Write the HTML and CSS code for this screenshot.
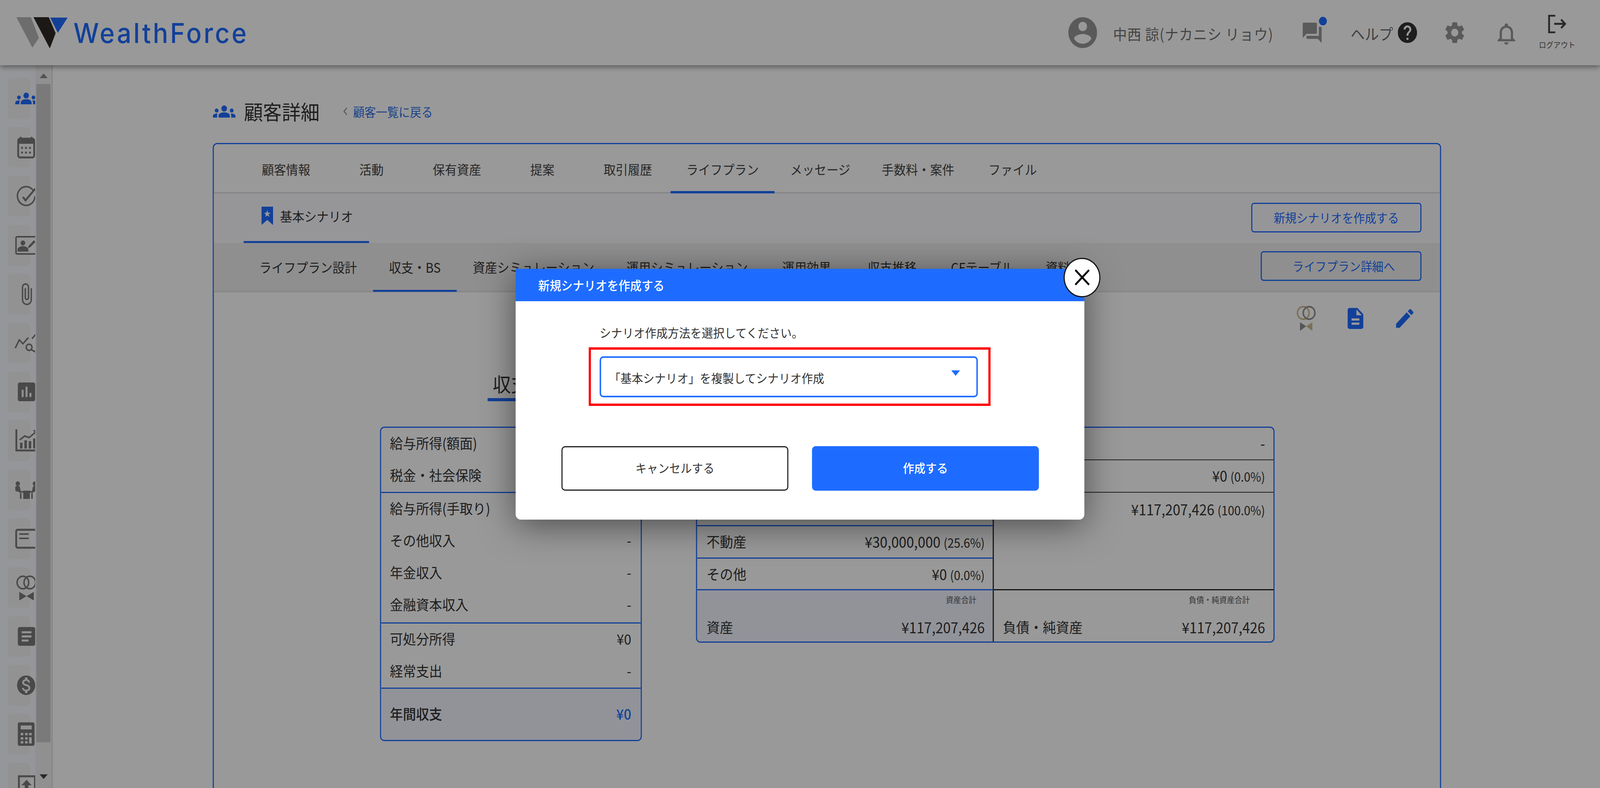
FILE: index.html
```html
<!DOCTYPE html>
<html lang="ja">
<head>
<meta charset="utf-8">
<title>顧客詳細</title>
<link rel="stylesheet" href="styles.css">
</head>
<body>
<div class="app" id="app">
<header class="topbar">
  <a class="logo">
    <svg class="logo-mark" viewBox="0 0 142 80"><polygon class="lm-grey" points="0,0 40,0 62,53 44,78"/><polygon class="lm-black" points="47,0 89,0 108,41 92,80"/><polygon class="lm-blue" points="93,1 141,1 114,40"/></svg>
    <span class="logo-text">WealthForce</span>
  </a>
  <div class="top-right">
    <svg class="i-avatar" viewBox="2 2 20 20"><path d="M12 2C6.48 2 2 6.48 2 12s4.48 10 10 10 10-4.48 10-10S17.52 2 12 2zm0 3c1.66 0 3 1.34 3 3s-1.34 3-3 3-3-1.34-3-3 1.34-3 3-3zm0 14.2c-2.5 0-4.71-1.28-6-3.22.03-1.99 4-3.08 6-3.08 1.99 0 5.97 1.09 6 3.08-1.29 1.94-3.5 3.22-6 3.22z"/></svg>
    <span class="user-name">中西 諒(ナカニシ リョウ)</span>
    <span class="chat">
      <svg class="i-chat" viewBox="2 2 20 20"><path d="M21 6h-2v9H6v2c0 .55.45 1 1 1h11l4 4V7c0-.55-.45-1-1-1zm-4 6V3c0-.55-.45-1-1-1H3c-.55 0-1 .45-1 1v14l4-4h10c.55 0 1-.45 1-1z"/></svg>
      <span class="chat-dot"></span>
    </span>
    <span class="help-text">ヘルプ</span>
    <svg class="i-help" viewBox="2 2 20 20"><path d="M12 2C6.48 2 2 6.48 2 12s4.48 10 10 10 10-4.48 10-10S17.52 2 12 2zm1 17h-2v-2h2v2zm2.07-7.75l-.9.92C13.45 12.9 13 13.5 13 15h-2v-.5c0-1.1.45-2.1 1.17-2.83l1.24-1.26c.37-.36.59-.86.59-1.41 0-1.1-.9-2-2-2s-2 .9-2 2H8c0-2.21 1.79-4 4-4s4 1.79 4 4c0 .88-.36 1.68-.93 2.25z"/></svg>
    <svg class="i-gear" viewBox="2.6 2 18.8 20"><path d="M19.14 12.94c.04-.3.06-.61.06-.94 0-.32-.02-.64-.07-.94l2.03-1.58c.18-.14.23-.41.12-.61l-1.92-3.32c-.12-.22-.37-.29-.59-.22l-2.39.96c-.5-.38-1.03-.7-1.62-.94l-.36-2.54c-.04-.24-.24-.41-.48-.41h-3.84c-.24 0-.43.17-.47.41l-.36 2.54c-.59.24-1.13.57-1.62.94l-2.39-.96c-.22-.08-.47 0-.59.22L2.74 8.87c-.12.21-.08.47.12.61l2.03 1.58c-.05.3-.09.63-.09.94s.02.64.07.94l-2.03 1.58c-.18.14-.23.41-.12.61l1.92 3.32c.12.22.37.29.59.22l2.39-.96c.5.38 1.03.7 1.62.94l.36 2.54c.05.24.24.41.48.41h3.84c.24 0 .44-.17.47-.41l.36-2.54c.59-.24 1.13-.56 1.62-.94l2.39.96c.22.08.47 0 .59-.22l1.92-3.32c.12-.22.07-.47-.12-.61l-2.01-1.58zM12 15.6c-1.98 0-3.6-1.62-3.6-3.6s1.62-3.6 3.6-3.6 3.6 1.62 3.6 3.6-1.62 3.6-3.6 3.6z"/></svg>
    <svg class="i-bell" viewBox="4 2.5 16 19.5" preserveAspectRatio="none"><path d="M12 22c1.1 0 2-.9 2-2h-4c0 1.1.9 2 2 2zm6-6v-5c0-3.07-1.63-5.64-4.5-6.32V4c0-.83-.67-1.5-1.5-1.5s-1.5.67-1.5 1.5v.68C7.64 5.36 6 7.92 6 11v5l-2 2v1h16v-1l-2-2zm-2 1H8v-6c0-2.48 1.51-4.5 4-4.5s4 2.02 4 4.5v6z"/></svg>
    <div class="logout">
      <svg class="i-logout" viewBox="0 0 51 47"><path class="lo-stroke" d="M20 2H3v43h17M17 23h30M36 12l11 11-11 11"/></svg>
      <span class="logout-text">ログアウト</span>
    </div>
  </div>
</header>

<div class="layout">
  <aside class="sidebar">
    <nav class="side-nav">
      <div class="side-item"><svg class="nav-icon nav-active" viewBox="0 0 60 60"><path transform="translate(0 15) scale(2.5) translate(0 -6)" d="M12 12.75c1.63 0 3.07.39 4.24.9 1.08.48 1.76 1.56 1.76 2.73V18H6v-1.61c0-1.18.68-2.26 1.76-2.73 1.17-.52 2.61-.91 4.24-.91zM4 13c1.1 0 2-.9 2-2s-.9-2-2-2-2 .9-2 2 .9 2 2 2zm1.13 1.1C4.76 14.04 4.39 14 4 14c-.99 0-1.93.21-2.78.58C.48 14.9 0 15.62 0 16.43V18h4.5v-1.61c0-.83.23-1.61.63-2.29zM20 13c1.1 0 2-.9 2-2s-.9-2-2-2-2 .9-2 2 .9 2 2 2zm4 3.43c0-.81-.48-1.53-1.22-1.85-.85-.37-1.79-.58-2.78-.58-.39 0-.76.04-1.13.1.4.68.63 1.46.63 2.29V18H24v-1.57zM12 6c1.66 0 3 1.34 3 3s-1.34 3-3 3-3-1.34-3-3 1.34-3 3-3z"/></svg></div>
      <div class="side-item"><svg class="nav-icon" viewBox="0 0 60 60"><rect x="13" y="3" width="4" height="10"/><rect x="43" y="3" width="4" height="10"/><rect class="nav-line" x="8" y="8" width="44" height="48" rx="5"/><path d="M7 21V12q0-5 5-5h36q5 0 5 5v9z"/><rect x="16" y="29" width="5" height="5"/><rect x="27" y="29" width="5" height="5"/><rect x="38" y="29" width="5" height="5"/><rect x="16" y="41" width="5" height="5"/><rect x="27" y="41" width="5" height="5"/><rect x="38" y="41" width="5" height="5"/></svg></div>
      <div class="side-item"><svg class="nav-icon" viewBox="0 0 60 60"><path class="nav-line nav-thin" d="M49 15A24 24 0 1 0 54 30"/><path class="nav-line" d="M21 32l7 9 27-30"/></svg></div>
      <div class="side-item"><svg class="nav-icon" viewBox="0 0 60 60"><rect class="nav-line nav-thin" x="2" y="8" width="70" height="44" rx="3"/><circle cx="21" cy="24" r="6.5"/><path d="M6 46v-5c0-6 9-9 15-9s15 3 15 9v5z"/><path d="M36 32l15-15 5 4-15 14-6 2z"/></svg></div>
      <div class="side-item"><svg class="nav-icon nav-clip" viewBox="7 1 11 22"><path d="M16.5 6v11.5c0 2.21-1.79 4-4 4s-4-1.79-4-4V5c0-1.38 1.12-2.5 2.5-2.5s2.5 1.12 2.5 2.5v10.5c0 .55-.45 1-1 1s-1-.45-1-1V6H10v9.5c0 1.38 1.12 2.5 2.5 2.5s2.5-1.12 2.5-2.5V5c0-2.21-1.79-4-4-4S7 2.79 7 5v12.5c0 3.04 2.46 5.5 5.5 5.5s5.5-2.46 5.5-5.5V6h-1.5z"/></svg></div>
      <div class="side-item"><svg class="nav-icon" viewBox="0 0 60 60"><path class="nav-line nav-thin" d="M0 43l11-21 10 10 15-16"/><path class="nav-line nav-thin" d="M46 19l10-11"/><circle class="nav-line nav-thin" cx="38" cy="41" r="8"/><path class="nav-line nav-thin" d="M44 47l12 6"/></svg></div>
      <div class="side-item"><svg class="nav-icon nav-wide" viewBox="3 3 18 18"><path d="M19 3H5c-1.1 0-2 .9-2 2v14c0 1.1.9 2 2 2h14c1.1 0 2-.9 2-2V5c0-1.1-.9-2-2-2zM9 17H7v-7h2v7zm4 0h-2V7h2v10zm4 0h-2v-4h2v4z"/></svg></div>
      <div class="side-item"><svg class="nav-icon" viewBox="0 0 60 60"><path class="nav-line" d="M3 1v54h56"/><rect x="13" y="35" width="7" height="15"/><rect x="25" y="29" width="7" height="21"/><rect x="37" y="31" width="7" height="19"/><rect x="49" y="24" width="7" height="26"/><path class="nav-line nav-thin" d="M12 28l14-10 12 4 18-14"/><path d="M48 3h13v12z"/></svg></div>
      <div class="side-item"><svg class="nav-icon" viewBox="0 0 60 60"><g id="seat"><circle cx="7" cy="14" r="6"/><path d="M0 24q0-4 4-4h5q3 0 4 4l2 9h6v4H13q-3 0-4-2l-1-1H4q-4 0-4-5z"/><rect x="13" y="38" width="4" height="15"/></g><rect x="21" y="32" width="20" height="5"/><rect x="22" y="37" width="18" height="16"/><use href="#seat" transform="translate(61 0) scale(-1 1)"/></svg></div>
      <div class="side-item"><svg class="nav-icon" viewBox="0 0 60 60"><rect class="nav-line" x="2.5" y="7" width="72" height="46" rx="4"/><rect x="11" y="16" width="26" height="4"/><rect x="11" y="27" width="26" height="4"/></svg></div>
      <div class="side-item"><svg class="nav-icon" viewBox="0 0 60 60"><circle class="nav-line nav-thin" cx="21" cy="17" r="16"/><circle class="nav-line nav-thin" cx="40" cy="17" r="16"/><path d="M11 41l20 11-20 11zM51 41L31 52l20 11z"/></svg></div>
      <div class="side-item"><svg class="nav-icon nav-wide" viewBox="3 3 18 18"><path d="M19 3H5c-1.1 0-2 .9-2 2v14c0 1.1.9 2 2 2h14c1.1 0 2-.9 2-2V5c0-1.1-.9-2-2-2zm-5 14H7v-2h7v2zm3-4H7v-2h10v2zm0-4H7V7h10v2z"/></svg></div>
      <div class="side-item"><svg class="nav-icon nav-coin" viewBox="2 2 20 20"><path d="M12 2C6.48 2 2 6.48 2 12s4.48 10 10 10 10-4.48 10-10S17.52 2 12 2zm1.41 16.09V20h-2.67v-1.93c-1.71-.36-3.16-1.46-3.27-3.4h1.96c.1 1.05.82 1.87 2.65 1.87 1.96 0 2.4-.98 2.4-1.59 0-.83-.44-1.61-2.67-2.14-2.48-.6-4.18-1.62-4.18-3.67 0-1.72 1.39-2.84 3.11-3.21V4h2.67v1.95c1.86.45 2.79 1.86 2.87 3.39H14.3c-.05-1.11-.64-1.87-2.22-1.87-1.5 0-2.4.68-2.4 1.64 0 .84.65 1.39 2.67 1.91s4.18 1.39 4.18 3.91c-.01 1.83-1.38 2.83-3.12 3.16z"/></svg></div>
      <div class="side-item"><svg class="nav-icon" viewBox="0 0 60 60"><path fill-rule="evenodd" d="M12 0h36q5 0 5 5v50q0 5-5 5H12q-5 0-5-5V5q0-5 5-5zM15 8v10h30V8zM15 27v6h7v-6zM27 27v6h7v-6zM38 27v6h7v-6zM15 38v6h7v-6zM27 38v6h7v-6zM38 38v16h7V38zM15 48v6h7v-6zM27 48v6h7v-6z"/></svg></div>
      <div class="side-item"><svg class="nav-icon" viewBox="0 0 60 60"><path class="nav-line" d="M10 56V12h44v44"/><path d="M31 21l14 14H36v14H26V35h-9z"/></svg></div>
    </nav>
    <div class="scrollbar">
      <span class="sb-up"></span>
      <span class="sb-thumb"></span>
      <span class="sb-down"></span>
    </div>
  </aside>

  <main class="main">
    <div class="page-title">
      <svg class="i-title" viewBox="0 6 24 12"><path d="M12 12.75c1.63 0 3.07.39 4.24.9 1.08.48 1.76 1.56 1.76 2.73V18H6v-1.61c0-1.18.68-2.26 1.76-2.73 1.17-.52 2.61-.91 4.24-.91zM4 13c1.1 0 2-.9 2-2s-.9-2-2-2-2 .9-2 2 .9 2 2 2zm1.13 1.1C4.76 14.04 4.39 14 4 14c-.99 0-1.93.21-2.78.58C.48 14.9 0 15.62 0 16.43V18h4.5v-1.61c0-.83.23-1.61.63-2.29zM20 13c1.1 0 2-.9 2-2s-.9-2-2-2-2 .9-2 2 .9 2 2 2zm4 3.43c0-.81-.48-1.53-1.22-1.85-.85-.37-1.79-.58-2.78-.58-.39 0-.76.04-1.13.1.4.68.63 1.46.63 2.29V18H24v-1.57zM12 6c1.66 0 3 1.34 3 3s-1.34 3-3 3-3-1.34-3-3 1.34-3 3-3z"/></svg>
      <h1 class="title-text">顧客詳細</h1>
      <svg class="i-chev" viewBox="0 0 11 20"><path d="M10 1L2 10l8 9"/></svg>
      <a class="back-link">顧客一覧に戻る</a>
    </div>

    <section class="card">
      <div class="tabs">
        <span class="tab">顧客情報</span>
        <span class="tab">活動</span>
        <span class="tab">保有資産</span>
        <span class="tab">提案</span>
        <span class="tab">取引履歴</span>
        <span class="tab tab-active">ライフプラン</span>
        <span class="tab">メッセージ</span>
        <span class="tab">手数料・案件</span>
        <span class="tab">ファイル</span>
      </div>
      <div class="scenario-row">
        <div class="scenario-tab">
          <svg class="i-bookmark" viewBox="0 0 32 47"><path class="bm-body" d="M0 0h32v47L16 34 0 47z"/><polygon class="bm-star" points="16,9 18.3,15.5 25,15.7 19.7,19.8 21.6,26.3 16,22.5 10.4,26.3 12.3,19.8 7,15.7 13.7,15.5"/></svg>
          <span>基本シナリオ</span>
        </div>
        <a class="btn-outline btn-new">新規シナリオを作成する</a>
      </div>
      <div class="subtab-row">
        <span class="subtab">ライフプラン設計</span>
        <span class="subtab subtab-active">収支・BS</span>
        <span class="subtab">資産シミュレーション</span>
        <span class="subtab">運用シミュレーション</span>
        <span class="subtab subtab-fixed">運用効果</span>
        <span class="subtab subtab-fixed">収支推移</span>
        <span class="subtab">CFテーブル</span>
        <span class="subtab">資料</span>
        <a class="btn-outline btn-detail">ライフプラン詳細へ</a>
      </div>
      <div class="tool-row">
        <svg class="i-rings" viewBox="0 0 54 64"><circle class="ring-gold" cx="19" cy="18" r="16"/><circle class="ring-grey" cx="35" cy="18" r="16"/><path class="bow-grey" d="M10 42l17 10-17 12z"/><path class="bow-gold" d="M44 42L27 52l17 12z"/></svg>
        <svg class="i-doc" viewBox="4 2 16 20"><path d="M14 2H6c-1.1 0-1.99.9-1.99 2L4 20c0 1.1.89 2 1.99 2H18c1.1 0 2-.9 2-2V8l-6-6zm2 16H8v-2h8v2zm0-4H8v-2h8v2zm-3-5V3.5L18.5 9H13z"/></svg>
        <svg class="i-edit" viewBox="3 3 18 18"><path d="M3 17.25V21h3.75L17.81 9.94l-3.75-3.75L3 17.25zM20.71 7.04c.39-.39.39-1.02 0-1.41l-2.34-2.34c-.39-.39-1.02-.39-1.41 0l-1.83 1.83 3.75 3.75 1.83-1.83z"/></svg>
      </div>

      <div class="report">
        <div class="col-pl">
          <h2 class="section-head"><span>収支</span></h2>
          <div class="pl-table">
            <div class="pl-group">
              <div class="pl-row"><span>給与所得(額面)</span><span></span></div>
              <div class="pl-row"><span>税金・社会保険</span><span></span></div>
            </div>
            <div class="pl-group pl-group-4">
              <div class="pl-row"><span>給与所得(手取り)</span><span></span></div>
              <div class="pl-row"><span>その他収入</span><span>-</span></div>
              <div class="pl-row"><span>年金収入</span><span>-</span></div>
              <div class="pl-row"><span>金融資本収入</span><span>-</span></div>
            </div>
            <div class="pl-group">
              <div class="pl-row"><span>可処分所得</span><span>¥0</span></div>
              <div class="pl-row"><span>経常支出</span><span>-</span></div>
            </div>
            <div class="pl-group pl-total">
              <div class="pl-row pl-row-total"><span>年間収支</span><span class="blue-num">¥0</span></div>
            </div>
          </div>
        </div>

        <div class="col-bs">
          <h2 class="section-head"><span>BS</span></h2>
          <div class="bs-table">
            <div class="bs-body">
              <div class="bs-assets">
                <div class="bs-row"></div>
                <div class="bs-row"></div>
                <div class="bs-row"></div>
                <div class="bs-row"><span>不動産</span><span class="bs-val">¥30,000,000 <small>(25.6%)</small></span></div>
                <div class="bs-row"><span>その他</span><span class="bs-val">¥0 <small>(0.0%)</small></span></div>
              </div>
              <div class="bs-liab">
                <div class="bs-row bs-row-dark"><span></span><span class="bs-val">-</span></div>
                <div class="bs-row bs-row-dark"><span></span><span class="bs-val">¥0 <small>(0.0%)</small></span></div>
                <div class="bs-row bs-row-grow"><span></span><span class="bs-val">¥117,207,426 <small>(100.0%)</small></span></div>
              </div>
            </div>
            <div class="bs-foot">
              <div class="bs-total bs-total-a">
                <div class="bs-cap bs-cap-a">資産合計</div>
                <div class="bs-sum"><span>資産</span><span class="bs-val">¥117,207,426</span></div>
              </div>
              <div class="bs-total bs-total-l">
                <div class="bs-cap bs-cap-l">負債・純資産合計</div>
                <div class="bs-sum"><span>負債・純資産</span><span class="bs-val">¥117,207,426</span></div>
              </div>
            </div>
          </div>
        </div>
      </div>
    </section>
  </main>
</div>

<div class="overlay">
  <div class="modal">
    <button class="modal-close" aria-label="閉じる"><svg class="i-x" viewBox="0 0 40 40"><path d="M1 1l38 38M39 1L1 39"/></svg></button>
    <div class="modal-head">新規シナリオを作成する</div>
    <div class="modal-body">
      <p class="modal-lead">シナリオ作成方法を選択してください。</p>
      <div class="highlight">
        <div class="select">
          <span class="select-value">「基本シナリオ」を複製してシナリオ作成</span>
          <span class="select-arrow"></span>
        </div>
      </div>
      <div class="modal-actions">
        <button class="btn-cancel">キャンセルする</button>
        <button class="btn-create">作成する</button>
      </div>
    </div>
  </div>
</div>
</div>
<script src="fit.js"></script>
</body>
</html>
```

FILE: styles.css
```css
* { box-sizing: border-box; }
html, body { margin: 0; padding: 0; overflow: hidden; height: 100%; background: #999; }
.app {
  width: 4400px;
  height: 2017px;
  overflow: hidden;
  position: relative;
  display: flex;
  flex-direction: column;
  background: #fff;
  color: #444;
  font-family: "Noto Sans CJK JP", "Noto Sans", sans-serif;
  font-size: 33px;
  transform-origin: 0 0;
  transform: scaleX(var(--fit-x, 1));
}
svg { display: block; flex-shrink: 0; }

/* top bar */
.topbar {
  height: 167px;
  flex-shrink: 0;
  display: flex;
  align-items: center;
  padding-left: 45px;
  background: #fff;
  box-shadow: 0 4px 14px rgba(0,0,0,.45);
  position: relative;
  z-index: 5;
}
.logo { display: flex; align-items: center; }
.logo-mark { width: 142px; height: 80px; }
.lm-grey { fill: #b6b6b6; }
.lm-black { fill: #2e2826; }
.lm-blue { fill: #1e6cff; }
.logo-text {
  margin-left: 15px;
  font-family: Inter, "Noto Sans", sans-serif;
  font-size: 70px;
  font-weight: 500;
  letter-spacing: 5.5px;
  color: #1e6cff;
  line-height: 1;
  padding-top: 2px;
}
.top-right { margin-left: auto; display: flex; align-items: center; padding-right: 67px; color: #707070; fill: #969696; }
.i-avatar { width: 79px; height: 79px; }
.user-name { margin-left: 44px; font-size: 38px; width: 444px; white-space: nowrap; letter-spacing: 1.3px; padding-top: 4px; }
.chat { position: relative; margin-left: 76px; display: block; }
.i-chat { width: 55px; height: 52px; }
.chat-dot { position: absolute; right: -13px; top: -15px; width: 22px; height: 22px; border-radius: 50%; background: #1e6cff; }
.help-text { margin-left: 78px; font-size: 39px; color: #6a6a6a; padding-top: 3px; }
.i-help { width: 53px; height: 53px; margin-left: 13px; fill: #333; }
.i-gear { width: 55px; height: 55px; margin-left: 76px; }
.i-bell { width: 49px; height: 54px; margin-left: 90px; margin-top: 6px; }
.logout { margin-left: 64px; width: 102px; display: flex; flex-direction: column; align-items: center; }
.i-logout { width: 51px; height: 47px; }
.lo-stroke { fill: none; stroke: #444; stroke-width: 5; }
.logout-text { font-size: 20px; line-height: 30px; margin-top: 15px; color: #555; white-space: nowrap; }

/* layout */
.layout { flex: 1; display: flex; min-height: 0; overflow: hidden; }
.sidebar {
  width: 145px;
  flex-shrink: 0;
  display: flex;
  background: #f9fbff;
  border-right: 3px solid #dcdcdc;
}
.side-nav { width: 97px; flex-shrink: 0; overflow: hidden; padding: 33px 0 0 21px; display: flex; flex-direction: column; gap: 21.2px; }
.side-item {
  width: 62px;
  height: 104px;
  flex-shrink: 0;
  border-radius: 10px;
  background: #f3f3f4;
  display: flex;
  align-items: center;
  padding-left: 21px;
}
.nav-icon { width: 60px; height: 60px; overflow: visible; fill: #7b7b7b; }
.nav-active { fill: #1e6cff; }
.nav-clip { width: 28px; height: 56px; margin-left: 18px; }
.nav-wide { width: 48px; height: 48px; margin-left: 7px; }
.nav-coin { width: 50px; height: 50px; margin-left: 5px; }
.nav-line { fill: none; stroke: #7b7b7b; stroke-width: 5; }
.nav-thin { stroke-width: 4; }

.scrollbar { flex: 1; background: #f1f1f1; display: flex; flex-direction: column; align-items: center; padding: 21px 0 23px; }
.sb-up { width: 0; height: 0; border-left: 11px solid transparent; border-right: 11px solid transparent; border-bottom: 12px solid #8a8a8a; flex-shrink: 0; }
.sb-thumb { width: 39px; flex: 1; background: #cbcbcb; margin: 15px 0 82px; }
.sb-down { width: 0; height: 0; border-left: 11px solid transparent; border-right: 11px solid transparent; border-top: 12px solid #444; flex-shrink: 0; }

/* main */
.main { flex: 1; min-width: 0; padding: 88px 437px 0 440px; overflow: hidden; }
.page-title { height: 60px; display: flex; align-items: center; }
.i-title { width: 63px; height: 31px; fill: #1e6cff; }
.title-text { margin: 0 0 0 23px; font-size: 52px; font-weight: 400; color: #333; line-height: 60px; }
.i-chev { width: 11px; height: 20px; margin-left: 65px; fill: none; stroke: #888; stroke-width: 2.5; }
.back-link { margin-left: 16px; font-size: 31.3px; color: #2d6ee8; }

.card { margin-top: 51px; height: 1800px; border: 3px solid #1e6cff; border-radius: 12px; overflow: hidden; background: #fff; }
.tabs { height: 126px; display: flex; padding-left: 81px; border-bottom: 3px solid #dedede; }
.tab { min-width: 235px; padding: 0 43px; height: 126px; display: flex; align-items: center; justify-content: center; font-size: 33.3px; color: #444; white-space: nowrap; }
.tab-active { border-bottom: 6px solid #1e6cff; padding-top: 6px; }

.scenario-row { height: 127px; display: flex; align-items: center; justify-content: space-between; padding: 0 51px 0 82px; background: #fafbff; }
.scenario-tab { width: 345px; height: 127px; padding: 0 0 7px 49px; display: flex; align-items: center; gap: 19px; border-bottom: 5px solid #1e6cff; font-size: 33.5px; color: #333; }
.i-bookmark { width: 32px; height: 47px; }
.bm-body { fill: #1e6cff; }
.bm-star { fill: #fff; }
.btn-outline { height: 76px; display: flex; align-items: center; justify-content: center; border: 3px solid #1e6cff; border-radius: 8px; color: #1e6cff; font-size: 31.3px; white-space: nowrap; }
.btn-new { width: 468px; margin-bottom: 4px; }
.btn-detail { width: 442px; margin-left: auto; margin-bottom: 6px; padding-left: 14px; }

.subtab-row { height: 126px; display: flex; align-items: center; padding: 0 51px 0 81px; background: #eeeeee; border-bottom: 3px solid #dedede; }
.subtab { height: 126px; padding: 0 44px; display: flex; align-items: center; justify-content: center; font-size: 33.6px; color: #333; white-space: nowrap; }
.subtab-fixed { min-width: 235px; }
.subtab-active { border-bottom: 5px solid #1e6cff; padding-top: 5px; }

.tool-row { display: flex; justify-content: flex-end; align-items: center; padding: 35px 73px 0 0; height: 99px; }
.i-rings { width: 54px; height: 64px; }
.ring-gold { fill: none; stroke: #cdbb8c; stroke-width: 4; }
.ring-grey { fill: none; stroke: #8e8e8e; stroke-width: 4; }
.bow-grey { fill: #8e8e8e; }
.bow-gold { fill: #cdbb8c; }
.i-doc { width: 43px; height: 54px; margin-left: 87px; fill: #1e6cff; }
.i-edit { width: 48px; height: 48px; margin-left: 90px; fill: #1e6cff; }

.report { display: grid; grid-template-columns: 720px 1591px; column-gap: 149px; padding: 104px 0 0 457px; }
.section-head { margin: 0 0 65px; text-align: center; font-weight: 400; font-size: 50px; color: #333; line-height: 60px; }
.section-head span { display: inline-block; padding: 0 14px 8px; border-bottom: 8px solid #1e6cff; }

.pl-table { border: 3px solid #1e6cff; border-radius: 12px; overflow: hidden; font-size: 36px; color: #333; }
.pl-group + .pl-group { border-top: 3px solid #1e6cff; }
.pl-group-4 { padding-bottom: 3px; }
.pl-row { height: 82px; display: flex; align-items: center; justify-content: space-between; padding: 0 26px 6px 24px; }
.pl-total { background: #f2f5ff; }
.pl-row-total { height: 131px; font-weight: 500; }
.blue-num { color: #1e6cff; }

.bs-table { border: 3px solid #1e6cff; border-radius: 12px; overflow: hidden; font-size: 36.5px; color: #333; }
.bs-body { display: flex; height: 416px; }
.bs-assets { width: 816px; flex-shrink: 0; border-right: 3px solid #222; display: flex; flex-direction: column; border-bottom: 3px solid #1e6cff; }
.bs-liab { flex: 1; display: flex; flex-direction: column; border-bottom: 3px solid #222; }
.bs-row { flex: 0 0 83px; display: flex; align-items: center; justify-content: space-between; padding: 0 22px 4px 26px; }
.bs-val { font-size: 37.5px; white-space: nowrap; }
.bs-assets .bs-row + .bs-row { border-top: 3px solid #1e6cff; }
.bs-row-dark { border-bottom: 2px solid #333; padding-right: 23px; }
.bs-row-grow { flex: 1; align-items: flex-start; padding: 14px 23px 0 26px; }
small { font-size: 32px; }
.bs-foot { display: flex; height: 131px; }
.bs-total { display: flex; flex-direction: column; }
.bs-total-a { width: 816px; flex-shrink: 0; background: #f2f5ff; border-right: 3px solid #222; padding: 8px 22px 0 26px; }
.bs-total-l { flex: 1; padding: 8px 23px 0 25px; }
.bs-cap { font-size: 21px; line-height: 30px; text-align: right; color: #555; }
.bs-cap-a { padding-right: 23px; }
.bs-cap-l { padding-right: 42px; }
.bs-sum { display: flex; justify-content: space-between; margin-top: 31px; line-height: 50px; }

/* modal */
.overlay { position: absolute; inset: 0; z-index: 10; background: rgba(0,0,0,.4); display: flex; align-items: center; justify-content: center; }
.modal { position: relative; width: 1564px; height: 642px; background: #fff; border-radius: 0 0 14px 14px; box-shadow: 0 14px 90px rgba(0,0,0,.5); }
.modal-head { height: 83px; background: #1e6cff; color: #fff; font-size: 31.6px; font-weight: 500; padding-left: 62px; display: flex; align-items: center; }
.modal-close { position: absolute; top: -28px; right: -44px; width: 101px; height: 101px; padding: 0; border-radius: 50%; border: 3px solid #111; background: #fff; display: flex; align-items: center; justify-content: center; }
.i-x { width: 40px; height: 40px; fill: none; stroke: #000; stroke-width: 5; }
.modal-body { display: flex; flex-direction: column; }
.modal-lead { margin: 55px 0 0 231px; font-size: 31.2px; line-height: 50px; color: #333; }
.highlight { margin: 13px 0 0 201px; width: 1105px; height: 150px; border: 6px solid #f00; padding: 17px 29px 16px 24px; }
.select { height: 105px; border: 4px solid #1e6cff; border-radius: 10px; display: flex; align-items: center; justify-content: space-between; padding: 4px 45px 0 22px; font-size: 31.2px; color: #333; }
.select-arrow { width: 0; height: 0; border-left: 12px solid transparent; border-right: 12px solid transparent; border-top: 14px solid #1e6cff; margin-bottom: 22px; }
.modal-actions { display: flex; gap: 65px; margin: 103px 0 0 126px; }
.btn-cancel, .btn-create { width: 624px; height: 114px; border-radius: 10px; font-family: inherit; font-size: 31px; padding: 0 0 4px; }
.btn-cancel { background: #fff; border: 3px solid #222; color: #333; }
.btn-create { background: #1e6cff; border: 0; color: #fff; font-weight: 500; }
```

FILE: fit.js
```js
// The design is 4400px wide; fit it to the window the browser really opened.
document.getElementById('app').style.setProperty('--fit-x', String(window.innerWidth / 4400));
```
